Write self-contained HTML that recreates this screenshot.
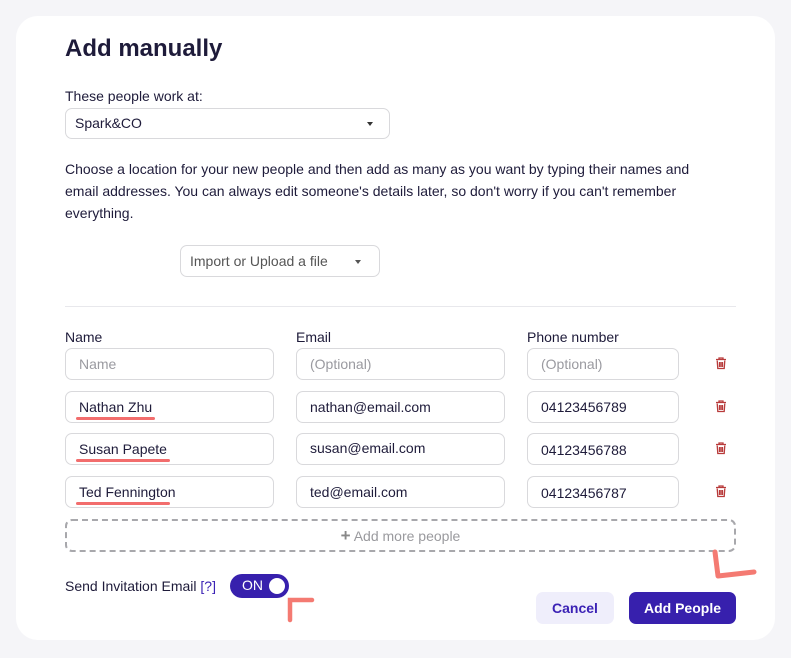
<!DOCTYPE html>
<html><head><style>
body{margin:0;width:791px;height:658px;background:#f5f5f8;font-family:"Liberation Sans",sans-serif;color:#1e1b3a;position:relative;overflow:hidden}
.card{position:absolute;left:16px;top:16px;width:759px;height:624px;background:#fff;border-radius:22px}
.a{position:absolute}
.in{position:absolute;height:30px;border:1px solid #d9d9dc;border-radius:7px;box-sizing:border-box;font-size:14px;line-height:29px;padding-left:13px;color:#1e1b3a}
.ph{color:#9a9aa0}
.ul{position:absolute;height:3px;background:#f26d6d;border-radius:2px}
.lbl{position:absolute;font-size:14px}
</style></head><body>
<div class="card"></div>
<div class="a" style="left:65px;top:35px;font-size:24px;font-weight:bold;color:#1e1b3a">Add manually</div>
<div class="lbl" style="left:65px;top:88px">These people work at:</div>
<div class="in" style="left:65px;top:108px;width:325px;height:31px;padding-left:9px">Spark&amp;CO<span style="position:absolute;right:16px;top:13px;border:3px solid transparent;border-top:4px solid #333;border-bottom:0"></span></div>
<div class="a" style="left:65px;top:158px;width:650px;font-size:14px;line-height:22px">Choose a location for your new people and then add as many as you want by typing their names and email addresses. You can always edit someone's details later, so don't worry if you can't remember everything.</div>
<div class="in" style="left:180px;top:245px;width:200px;height:32px;line-height:31px;padding-left:9px;color:#555">Import or Upload a file<span style="position:absolute;right:18px;top:14px;border:3px solid transparent;border-top:4px solid #555;border-bottom:0"></span></div>
<div class="a" style="left:65px;top:306px;width:671px;height:1px;background:#e8e8ec"></div>
<div class="lbl" style="left:65px;top:329px">Name</div>
<div class="lbl" style="left:296px;top:329px">Email</div>
<div class="lbl" style="left:527px;top:329px">Phone number</div>

<div class="in ph" style="left:65px;top:348px;width:209px;height:32px;line-height:31px">Name</div>
<div class="in ph" style="left:296px;top:348px;width:209px;height:32px;line-height:31px">(Optional)</div>
<div class="in ph" style="left:527px;top:348px;width:152px;height:32px;line-height:31px">(Optional)</div>

<div class="in" style="left:65px;top:391px;width:209px;height:32px;line-height:31px">Nathan Zhu</div>
<div class="in" style="left:296px;top:391px;width:209px;height:32px;line-height:31px">nathan@email.com</div>
<div class="in" style="left:527px;top:391px;width:152px;height:32px;line-height:31px">04123456789</div>
<div class="ul" style="left:76px;top:417px;width:79px"></div>

<div class="in" style="left:65px;top:433px;width:209px;height:32px;line-height:31px">Susan Papete</div>
<div class="in" style="left:296px;top:433px;width:209px;height:32px;line-height:29px">susan@email.com</div>
<div class="in" style="left:527px;top:433px;width:152px;height:32px;line-height:33px">04123456788</div>
<div class="ul" style="left:76px;top:459px;width:94px"></div>

<div class="in" style="left:65px;top:476px;width:209px;height:32px;line-height:30px">Ted Fennington</div>
<div class="in" style="left:296px;top:476px;width:209px;height:32px;line-height:31px">ted@email.com</div>
<div class="in" style="left:527px;top:476px;width:152px;height:32px;line-height:33px">04123456787</div>
<div class="ul" style="left:76px;top:502px;width:94px"></div>

<svg class="a" style="left:715px;top:357px" width="12" height="150" viewBox="0 0 12 150">
<g fill="none" stroke="#b83a3a" stroke-width="1.3">
<g id="t"><path d="M1 2.5h10M4 2.5V1h4v1.5M2.2 3.5l.6 8h6.4l.6-8M4.5 5v5M6 5v5M7.5 5v5"/></g>
<use href="#t" y="43"/><use href="#t" y="85"/><use href="#t" y="128"/>
</g></svg>

<div class="a" style="left:65px;top:519px;width:671px;height:33px;border:2px dashed #a8a8ac;border-radius:7px;box-sizing:border-box;text-align:center;font-size:14px;line-height:30px;color:#9a9a9e"><b style="color:#888;font-size:17px">+</b> Add more people</div>

<div class="lbl" style="left:65px;top:578px">Send Invitation Email <span style="color:#3b22b5">[?]</span></div>
<div class="a" style="left:230px;top:574px;width:59px;height:24px;border-radius:12px;background:#3720ad;color:#fff;font-size:14px;line-height:23px"><span style="position:absolute;left:12px">ON</span><span style="position:absolute;right:4px;top:4px;width:16px;height:16px;border-radius:50%;background:#fff"></span></div>
<svg class="a" style="left:285px;top:592px" width="30" height="32"><path d="M5 28V8h22" fill="none" stroke="#f47a72" stroke-width="4.5" stroke-linecap="round"/></svg>
<svg class="a" style="left:708px;top:548px" width="50" height="36"><path d="M7 4l3 24 36-4" fill="none" stroke="#f47a72" stroke-width="5" stroke-linecap="round" stroke-linejoin="round"/></svg>

<div class="a" style="left:536px;top:592px;width:78px;height:32px;border-radius:7px;background:#efeefb;color:#3b22b5;font-size:14px;font-weight:bold;text-align:center;line-height:32px">Cancel</div>
<div class="a" style="left:629px;top:592px;width:107px;height:32px;border-radius:7px;background:#3720ad;color:#fff;font-size:14px;font-weight:bold;text-align:center;line-height:32px">Add People</div>
</body></html>
